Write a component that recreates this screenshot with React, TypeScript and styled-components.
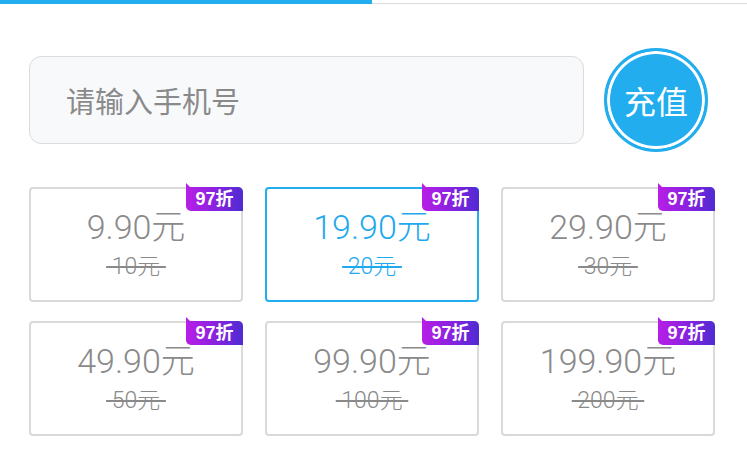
import React, { useState } from "react";
import styled, { createGlobalStyle } from "styled-components";

const BLUE = "#21adee";

const Global = createGlobalStyle`
  html, body { margin: 0; padding: 0; background: #fff; }
  body { font-family: "Liberation Sans", "Noto Sans CJK SC", sans-serif; }
  * { box-sizing: border-box; }
`;

const Page = styled.div`
  width: 747px;
  height: 474px;
  background: #fff;
  overflow: hidden;
`;

const Track = styled.div`
  display: flex;
  height: 4px;
`;

const Fill = styled.div<{ $w: number }>`
  width: ${(p) => p.$w}px;
  height: 4px;
  background: ${BLUE};
`;

const Rest = styled.div`
  flex: 1;
  align-self: flex-end;
  height: 1px;
  background: #dcdcdc;
`;

const InputRow = styled.div`
  display: flex;
  align-items: center;
  gap: 20px;
  margin: 44px 39px 0 29px;
`;

const PhoneInput = styled.input`
  flex: 1;
  height: 88px;
  border: 1px solid #dcdcdc;
  border-radius: 12px;
  background: #f8f9fb;
  padding: 0 0 0 36px;
  font-family: "Noto Sans CJK SC", sans-serif;
  font-size: 29px;
  color: #333;
  outline: none;
  &::placeholder {
    color: #8a8a8a;
  }
`;

const ChargeButton = styled.button`
  width: 104px;
  height: 104px;
  border-radius: 50%;
  border: 3px solid ${BLUE};
  box-shadow: inset 0 0 0 3px #fff;
  background: ${BLUE};
  color: #fff;
  font-family: "Noto Sans CJK SC", sans-serif;
  font-size: 32px;
  padding: 0;
  display: flex;
  align-items: center;
  justify-content: center;
  cursor: pointer;
`;

const Grid = styled.div`
  display: grid;
  grid-template-columns: repeat(3, 214px);
  column-gap: 22px;
  row-gap: 19px;
  margin: 35px 0 0 29px;
`;

const Card = styled.div<{ $active: boolean }>`
  position: relative;
  height: 115px;
  border: 2px solid ${(p) => (p.$active ? BLUE : "#d9d9d9")};
  border-radius: 4px;
  padding-top: 19px;
  display: flex;
  flex-direction: column;
  align-items: center;
  color: ${(p) => (p.$active ? "#1fa9ef" : "#8a8a8a")};
  cursor: pointer;
`;

const Badge = styled.div`
  position: absolute;
  top: -2px;
  right: -2px;
  width: 57px;
  height: 24px;
  border-radius: 0 5px 0 5px;
  background: linear-gradient(90deg, #b81ee6 0%, #8a22e0 50%, #4f2bd2 100%);
  color: #fff;
  font-family: "Liberation Sans", "Noto Sans CJK SC", sans-serif;
  font-weight: 700;
  font-size: 18px;
  line-height: 24px;
  text-align: center;
  &::before {
    content: "";
    position: absolute;
    left: 0;
    top: -4px;
    width: 0;
    height: 0;
    border-left: 4px solid #b81ee6;
    border-top: 4px solid transparent;
  }
`;

const Price = styled.div`
  font-family: "Roboto", "Noto Sans CJK SC", sans-serif;
  font-weight: 300;
  font-size: 34px;
  line-height: 38px;
`;

const Original = styled.div`
  margin-top: 7px;
  font-family: "Roboto", "Noto Sans CJK SC", sans-serif;
  font-weight: 300;
  font-size: 23px;
  line-height: 27px;
  text-decoration: line-through;
  text-decoration-thickness: 2px;
  white-space: pre;
`;

const items = [
  { price: "9.90", orig: "10" },
  { price: "19.90", orig: "20" },
  { price: "29.90", orig: "30" },
  { price: "49.90", orig: "50" },
  { price: "99.90", orig: "100" },
  { price: "199.90", orig: "200" },
];

export default function App() {
  const [active, setActive] = useState(1);
  return (
    <Page>
      <Global />
      <Track>
        <Fill $w={372} />
        <Rest />
      </Track>
      <InputRow>
        <PhoneInput placeholder="请输入手机号" />
        <ChargeButton>充值</ChargeButton>
      </InputRow>
      <Grid>
        {items.map((it, i) => (
          <Card key={i} $active={i === active} onClick={() => setActive(i)}>
            <Badge>97折</Badge>
            <Price>{it.price}元</Price>
            <Original>{` ${it.orig}元 `}</Original>
          </Card>
        ))}
      </Grid>
    </Page>
  );
}
